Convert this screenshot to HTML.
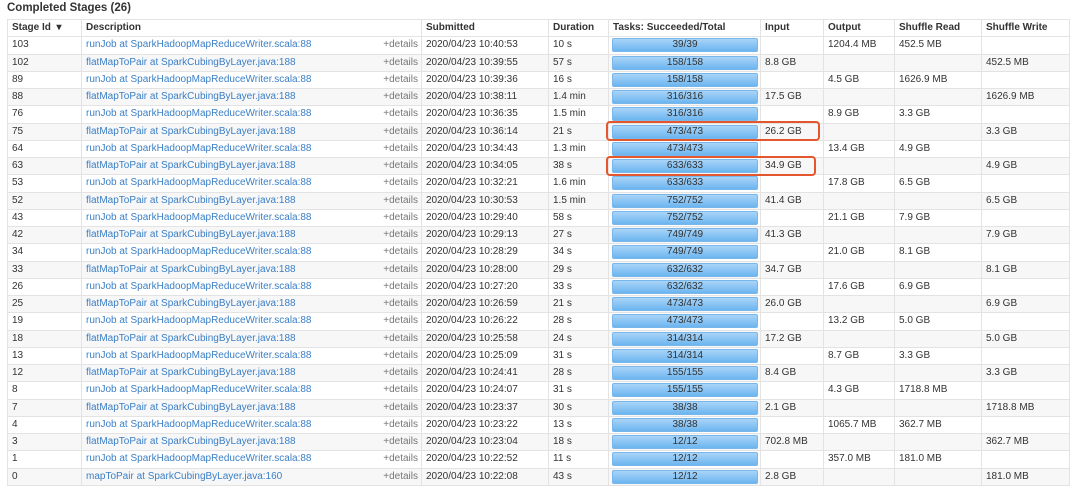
<!DOCTYPE html>
<html><head><meta charset="utf-8"><style>
body{margin:0;width:1080px;height:493px;background:#fff;font-family:"Liberation Sans",Arial,sans-serif;font-size:10px;color:#333;position:relative;overflow:hidden}
h4{position:absolute;left:7px;top:1px;margin:0;font-size:11.5px;font-weight:bold;line-height:14px}
table{position:absolute;left:7px;top:19px;width:1062px;border-collapse:collapse;table-layout:fixed}
td,th{border:1px solid #e3e3e3;height:16.26px;padding:0 0 0 4px;text-align:left;white-space:nowrap;overflow:hidden;line-height:16px;vertical-align:middle}
th{font-weight:bold;background:#fff}
tr:nth-child(odd) td{background:#f7f7f7}
a{color:#3a7fc6;text-decoration:none}
.d{float:right;color:#777;padding-right:3px}
.bar{margin:0 2px 0 -1px;height:12px;border-radius:2px;background:linear-gradient(#a9d4f8,#6cb5ef);border:1px solid #79b7ea;text-align:center;line-height:12px;color:#333;font-size:10px}
.box{position:absolute;border:2px solid #e4572e;border-radius:4px;left:606px;width:210px;height:16px}
</style></head><body>
<h4>Completed Stages (26)</h4>
<table>
<colgroup><col style="width:74px"><col style="width:340px"><col style="width:127px"><col style="width:60px"><col style="width:152px"><col style="width:63px"><col style="width:71px"><col style="width:87px"><col style="width:88px"></colgroup>
<tr><th>Stage Id &nbsp;▾</th><th>Description</th><th>Submitted</th><th>Duration</th><th>Tasks: Succeeded/Total</th><th>Input</th><th>Output</th><th>Shuffle Read</th><th>Shuffle Write</th></tr>
<tr><td>103</td><td><a>runJob at SparkHadoopMapReduceWriter.scala:88</a><span class="d">+details</span></td><td>2020/04/23 10:40:53</td><td>10 s</td><td><div class="bar">39/39</div></td><td></td><td>1204.4 MB</td><td>452.5 MB</td><td></td></tr>
<tr><td>102</td><td><a>flatMapToPair at SparkCubingByLayer.java:188</a><span class="d">+details</span></td><td>2020/04/23 10:39:55</td><td>57 s</td><td><div class="bar">158/158</div></td><td>8.8 GB</td><td></td><td></td><td>452.5 MB</td></tr>
<tr><td>89</td><td><a>runJob at SparkHadoopMapReduceWriter.scala:88</a><span class="d">+details</span></td><td>2020/04/23 10:39:36</td><td>16 s</td><td><div class="bar">158/158</div></td><td></td><td>4.5 GB</td><td>1626.9 MB</td><td></td></tr>
<tr><td>88</td><td><a>flatMapToPair at SparkCubingByLayer.java:188</a><span class="d">+details</span></td><td>2020/04/23 10:38:11</td><td>1.4 min</td><td><div class="bar">316/316</div></td><td>17.5 GB</td><td></td><td></td><td>1626.9 MB</td></tr>
<tr><td>76</td><td><a>runJob at SparkHadoopMapReduceWriter.scala:88</a><span class="d">+details</span></td><td>2020/04/23 10:36:35</td><td>1.5 min</td><td><div class="bar">316/316</div></td><td></td><td>8.9 GB</td><td>3.3 GB</td><td></td></tr>
<tr><td>75</td><td><a>flatMapToPair at SparkCubingByLayer.java:188</a><span class="d">+details</span></td><td>2020/04/23 10:36:14</td><td>21 s</td><td><div class="bar">473/473</div></td><td>26.2 GB</td><td></td><td></td><td>3.3 GB</td></tr>
<tr><td>64</td><td><a>runJob at SparkHadoopMapReduceWriter.scala:88</a><span class="d">+details</span></td><td>2020/04/23 10:34:43</td><td>1.3 min</td><td><div class="bar">473/473</div></td><td></td><td>13.4 GB</td><td>4.9 GB</td><td></td></tr>
<tr><td>63</td><td><a>flatMapToPair at SparkCubingByLayer.java:188</a><span class="d">+details</span></td><td>2020/04/23 10:34:05</td><td>38 s</td><td><div class="bar">633/633</div></td><td>34.9 GB</td><td></td><td></td><td>4.9 GB</td></tr>
<tr><td>53</td><td><a>runJob at SparkHadoopMapReduceWriter.scala:88</a><span class="d">+details</span></td><td>2020/04/23 10:32:21</td><td>1.6 min</td><td><div class="bar">633/633</div></td><td></td><td>17.8 GB</td><td>6.5 GB</td><td></td></tr>
<tr><td>52</td><td><a>flatMapToPair at SparkCubingByLayer.java:188</a><span class="d">+details</span></td><td>2020/04/23 10:30:53</td><td>1.5 min</td><td><div class="bar">752/752</div></td><td>41.4 GB</td><td></td><td></td><td>6.5 GB</td></tr>
<tr><td>43</td><td><a>runJob at SparkHadoopMapReduceWriter.scala:88</a><span class="d">+details</span></td><td>2020/04/23 10:29:40</td><td>58 s</td><td><div class="bar">752/752</div></td><td></td><td>21.1 GB</td><td>7.9 GB</td><td></td></tr>
<tr><td>42</td><td><a>flatMapToPair at SparkCubingByLayer.java:188</a><span class="d">+details</span></td><td>2020/04/23 10:29:13</td><td>27 s</td><td><div class="bar">749/749</div></td><td>41.3 GB</td><td></td><td></td><td>7.9 GB</td></tr>
<tr><td>34</td><td><a>runJob at SparkHadoopMapReduceWriter.scala:88</a><span class="d">+details</span></td><td>2020/04/23 10:28:29</td><td>34 s</td><td><div class="bar">749/749</div></td><td></td><td>21.0 GB</td><td>8.1 GB</td><td></td></tr>
<tr><td>33</td><td><a>flatMapToPair at SparkCubingByLayer.java:188</a><span class="d">+details</span></td><td>2020/04/23 10:28:00</td><td>29 s</td><td><div class="bar">632/632</div></td><td>34.7 GB</td><td></td><td></td><td>8.1 GB</td></tr>
<tr><td>26</td><td><a>runJob at SparkHadoopMapReduceWriter.scala:88</a><span class="d">+details</span></td><td>2020/04/23 10:27:20</td><td>33 s</td><td><div class="bar">632/632</div></td><td></td><td>17.6 GB</td><td>6.9 GB</td><td></td></tr>
<tr><td>25</td><td><a>flatMapToPair at SparkCubingByLayer.java:188</a><span class="d">+details</span></td><td>2020/04/23 10:26:59</td><td>21 s</td><td><div class="bar">473/473</div></td><td>26.0 GB</td><td></td><td></td><td>6.9 GB</td></tr>
<tr><td>19</td><td><a>runJob at SparkHadoopMapReduceWriter.scala:88</a><span class="d">+details</span></td><td>2020/04/23 10:26:22</td><td>28 s</td><td><div class="bar">473/473</div></td><td></td><td>13.2 GB</td><td>5.0 GB</td><td></td></tr>
<tr><td>18</td><td><a>flatMapToPair at SparkCubingByLayer.java:188</a><span class="d">+details</span></td><td>2020/04/23 10:25:58</td><td>24 s</td><td><div class="bar">314/314</div></td><td>17.2 GB</td><td></td><td></td><td>5.0 GB</td></tr>
<tr><td>13</td><td><a>runJob at SparkHadoopMapReduceWriter.scala:88</a><span class="d">+details</span></td><td>2020/04/23 10:25:09</td><td>31 s</td><td><div class="bar">314/314</div></td><td></td><td>8.7 GB</td><td>3.3 GB</td><td></td></tr>
<tr><td>12</td><td><a>flatMapToPair at SparkCubingByLayer.java:188</a><span class="d">+details</span></td><td>2020/04/23 10:24:41</td><td>28 s</td><td><div class="bar">155/155</div></td><td>8.4 GB</td><td></td><td></td><td>3.3 GB</td></tr>
<tr><td>8</td><td><a>runJob at SparkHadoopMapReduceWriter.scala:88</a><span class="d">+details</span></td><td>2020/04/23 10:24:07</td><td>31 s</td><td><div class="bar">155/155</div></td><td></td><td>4.3 GB</td><td>1718.8 MB</td><td></td></tr>
<tr><td>7</td><td><a>flatMapToPair at SparkCubingByLayer.java:188</a><span class="d">+details</span></td><td>2020/04/23 10:23:37</td><td>30 s</td><td><div class="bar">38/38</div></td><td>2.1 GB</td><td></td><td></td><td>1718.8 MB</td></tr>
<tr><td>4</td><td><a>runJob at SparkHadoopMapReduceWriter.scala:88</a><span class="d">+details</span></td><td>2020/04/23 10:23:22</td><td>13 s</td><td><div class="bar">38/38</div></td><td></td><td>1065.7 MB</td><td>362.7 MB</td><td></td></tr>
<tr><td>3</td><td><a>flatMapToPair at SparkCubingByLayer.java:188</a><span class="d">+details</span></td><td>2020/04/23 10:23:04</td><td>18 s</td><td><div class="bar">12/12</div></td><td>702.8 MB</td><td></td><td></td><td>362.7 MB</td></tr>
<tr><td>1</td><td><a>runJob at SparkHadoopMapReduceWriter.scala:88</a><span class="d">+details</span></td><td>2020/04/23 10:22:52</td><td>11 s</td><td><div class="bar">12/12</div></td><td></td><td>357.0 MB</td><td>181.0 MB</td><td></td></tr>
<tr><td>0</td><td><a>mapToPair at SparkCubingByLayer.java:160</a><span class="d">+details</span></td><td>2020/04/23 10:22:08</td><td>43 s</td><td><div class="bar">12/12</div></td><td>2.8 GB</td><td></td><td></td><td>181.0 MB</td></tr>
</table>
<div class="box" style="top:121px"></div>
<div class="box" style="top:156px;width:206px"></div>
</body></html>
